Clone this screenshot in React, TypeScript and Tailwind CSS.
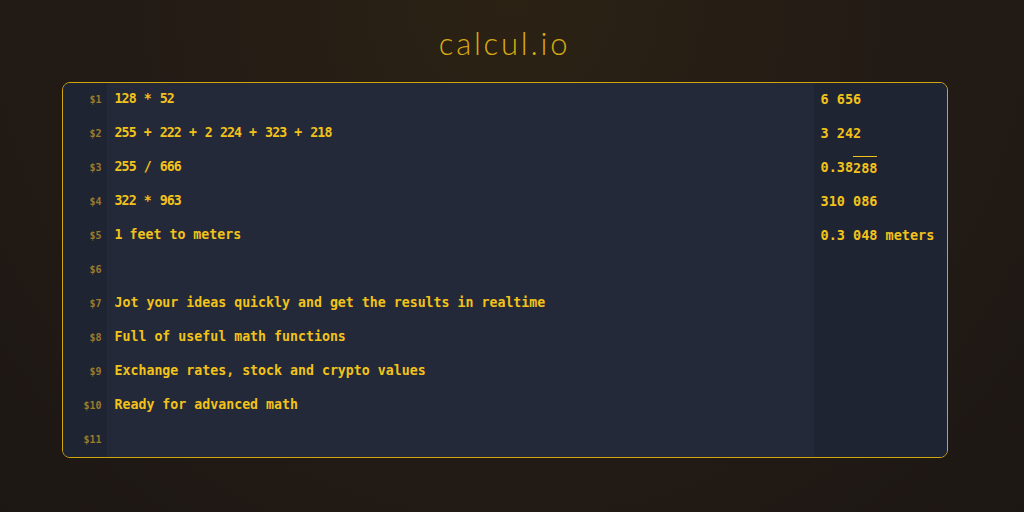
const rows: { expr: string; result?: React.ReactNode }[] = [
  { expr: "128 * 52", result: "6 656" },
  { expr: "255 + 222 + 2 224 + 323 + 218", result: "3 242" },
  {
    expr: "255 / 666",
    result: (
      <>
        0.38<span className="border-t border-[#f2c21b] pt-[1px]">288</span>
      </>
    ),
  },
  { expr: "322 * 963", result: "310 086" },
  { expr: "1 feet to meters", result: "0.3 048 meters" },
  { expr: "" },
  { expr: "Jot your ideas quickly and get the results in realtime" },
  { expr: "Full of useful math functions" },
  { expr: "Exchange rates, stock and crypto values" },
  { expr: "Ready for advanced math" },
  { expr: "" },
];

// digits in the editor are set a bit tighter than the rest of the text
function Expr({ text }: { text: string }) {
  const parts = text.split(/(\d+)/);
  return (
    <>
      {parts.map((p, i) =>
        /^\d+$/.test(p) ? (
          <span key={i} className="tracking-[-0.9px]">
            {p}
          </span>
        ) : (
          <span key={i}>{p}</span>
        )
      )}
    </>
  );
}

export default function App() {
  return (
    <div className="flex h-[512px] w-full flex-col items-center bg-[radial-gradient(ellipse_at_top,#2b2214_0%,#221b15_55%,#1d1714_100%)] pr-[15px]">
      <h1 className="mt-[23px] h-[40px] font-['Lato',sans-serif] text-[31px] font-light leading-[40px] tracking-[0.09em] text-[#d8ab12]">
        calcul.io
      </h1>
      <div className="mt-[19px] flex w-[886px] flex-col overflow-hidden rounded-lg border border-[#d1a60f] bg-[#232938] font-['DejaVu_Sans_Mono',monospace] font-bold">
        {rows.map((row, i) => (
          <div key={i} className="flex h-[34px] items-center">
            <div className="flex h-full w-[44px] items-center justify-end bg-[#1f2433] pb-[2px] pr-[5px] text-[10px] text-[#9c7a2c]">
              ${i + 1}
            </div>
            <div className="flex h-full flex-1 items-center whitespace-pre pb-[2px] pl-[8px] text-[13.25px] text-[#f2c21b]">
              <Expr text={row.expr} />
            </div>
            <div className="flex h-full w-[133px] items-center whitespace-pre bg-[#1f2432] pb-[2px] pl-[7px] text-[13.5px] text-[#f2c21b]">
              {row.result}
            </div>
          </div>
        ))}
      </div>
    </div>
  );
}
